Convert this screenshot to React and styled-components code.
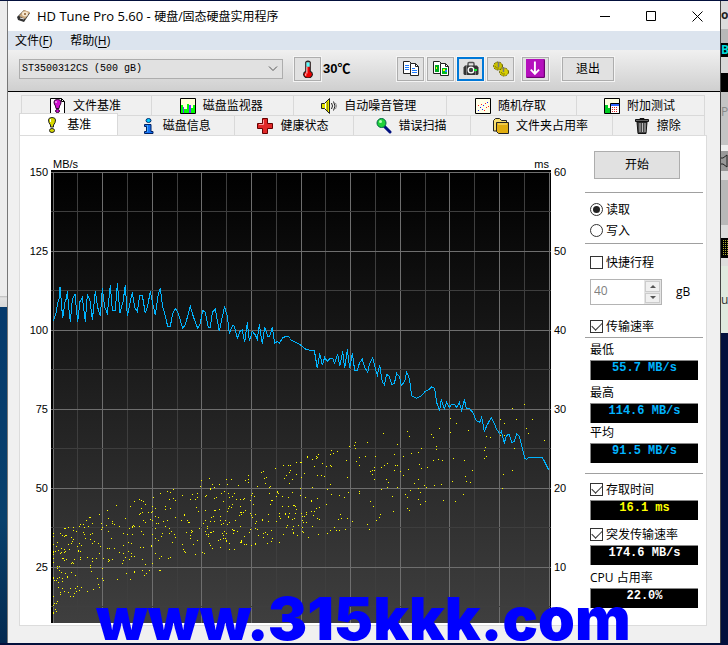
import React, { useState } from "react";
import styled, { createGlobalStyle } from "styled-components";

const speedStart =
  "160,152 168,130 174,95 178,85 180,52 183,85 188,145 196,90 199,88 202,64 206,110 211,155 217,88 225,73 233,155 240,95 247,83 256,155 262,73 270,92 277,150 286,63 293,112 301,138 307,55 314,112 322,130 331,46 337,121 346,121 352,40 360,128 369,95 376,46 382,138 388,108 397,67 404,112 412,125 419,76 427,76 436,130 443,108 451,64 458,100 466,136 475,70 481,55 488,112 494,130 503,169 511,169 518,130 527,115 535,130 548,175 556,164 571,109 580,140 593,175 601,160 608,121 616,127 625,172 631,172 637,127 646,118 658,184 667,140 674,109 682,140 688,190 698,166 703,169 712,205 720,184 727,180 734,217 742,157 748,214 757,184 766,195 772,208 778,163 787,223 794,172 803,199 809,199 817,172 824,220 832,214 838,220 848,203 862,198 870,202";
const speedEnd =
  "0,208 12,214 30,224 48,238 60,241 73,241 82,295 89,250 97,286 104,262 112,274 121,265 128,265 134,280 143,253 149,289 158,244 164,295 172,238 179,295 187,250 194,301 202,301 209,277 217,268 224,292 233,307 239,280 248,263 255,292 262,316 269,286 277,335 283,344 290,313 298,319 305,344 313,340 320,310 329,320 334,347 344,334 350,307 358,325 365,377 380,385 392,379 406,364 418,358 425,350 434,355 440,398 449,421 454,388 463,418 470,397 478,412 485,403 494,403 500,412 508,397 515,421 523,388 529,416 539,416 550,430 558,451 569,457 575,442 583,484 592,464 604,442 613,460 620,478 629,491 634,484 643,518 650,496 658,493 665,517 673,515 680,491 688,499 697,536 704,564 709,568 718,562 757,562 776,599";

const farSeeks =
  "703,13 667,25 481,55 631,58 679,58 727,58 499,70 643,70 448,85 709,85 535,91 481,97 352,94 358,108 280,100 425,103 430,112 589,109 601,112 715,100 763,121 631,106 643,106 197,127 193,137 232,127 322,133 439,139 439,149 586,142 583,151 673,145 178,139 196,146 142,154 130,160 394,145 385,157 364,161 340,168 313,163 256,169 226,169 208,171 169,181 199,184 292,190 316,196 323,196 388,193 430,181 445,178 457,181 490,175 523,181 583,175 589,169 547,211 667,211 640,223 283,196 274,202 241,214 247,211 253,202 253,211 208,196 313,211 331,214 355,208 394,205 412,202 172,232 247,223 253,238 289,238 295,247 322,262 340,226 373,250 385,238 403,256 409,262 433,256 454,253 487,244 526,229 529,244 541,247 637,265 361,271 385,265 391,277 385,298 391,313 406,304 460,302 496,304 520,283 346,283 352,292 352,325 358,331 310,334 307,289 241,304 250,319 271,343 268,352 259,361 232,373 238,388 187,364 172,355 151,343 154,355 145,358 166,388 148,391 139,391 133,382 148,286 163,292 175,277 208,274 208,280 274,268 292,262"
    .split(" ")
    .map((pair) => pair.split(",").map(Number))
    .map(([x, y]) => [x + 717, y + 690]);

// [x, earliest, latest] limits of the seek cloud
const seekBand = [
  [6, 1090, 1350],
  [80, 1055, 1280],
  [190, 1000, 1250],
  [300, 980, 1215],
  [450, 925, 1160],
  [630, 905, 1130],
  [850, 830, 1090],
];

function nearSeeks(count) {
  let seed = 7;
  const random = () => {
    seed = (seed * 16807) % 2147483647;
    return seed / 2147483647;
  };
  return Array.from({ length: count }, () => {
    const x = 6 + 840 * Math.pow(random(), 1.25);
    const i = seekBand.findIndex((b) => b[0] >= x);
    const a = seekBand[Math.max(i - 1, 0)];
    const b = seekBand[Math.max(i, 1)];
    const t = (x - a[0]) / (b[0] - a[0]);
    const top = a[1] + (b[1] - a[1]) * t;
    const bottom = a[2] + (b[2] - a[2]) * t;
    return [x, top + (bottom - top) * random()];
  });
}

const snap = (n) => Math.floor(n / 3) * 3;
const seeks = [...nearSeeks(530), ...farSeeks];

// icons
const icons = {
  disk: (
    <>
      <path d="M1 9 8 2l6 3-6 9-6-2z" fill="#333" />
      <path d="M3 8 8 2l6 2-5 7z" fill="#c9a77c" />
      <ellipse cx="9" cy="6" rx="3" ry="2.4" fill="#f5e6cf" />
      <circle cx="9" cy="6" r="1" fill="#8a5a2b" />
      <path d="m4 10 4 1" stroke="#eee" />
    </>
  ),
  thermometer: (
    <>
      <path d="M6 2q2-2 4 0v8q2 1 2 3-1 3-4 3t-4-3q0-2 2-3z" fill="#e00" stroke="#222" />
      <path d="M6.500 2h3v4h-3z" fill="#5ff" />
      <path d="M7 6v6M6 12v2" stroke="#fff" strokeWidth=".8" />
    </>
  ),
  copy: (
    <>
      <path d="M.500.500h6l2 2v10h-8z" fill="#fff" stroke="#222" />
      <path d="M7.500 2.500h5l3 3v9h-8z" fill="#fff" stroke="#222" />
      <path d="M12.500 2.500v3h3" fill="none" stroke="#222" />
      <path d="M2 4.500h4M2 6.500h4M2 8.500h4M9 7.500h3M9 9.500h5M9 11.500h5" stroke="#1e7bff" />
    </>
  ),
  copyImage: (
    <>
      <path d="M.500.500h6l2 2v10h-8z" fill="#fff" stroke="#222" />
      <path d="M2 4h4v7H2z" fill="#0a2" />
      <path d="M7.500 2.500h5l3 3v9h-8z" fill="#fff" stroke="#222" />
      <path d="M12.500 2.500v3h3" fill="none" stroke="#222" />
      <path d="M9 7h5v6H9z" fill="#0b2" />
      <path d="M10 8h2v2h-2zM3 6h1v2H3z" fill="#ff0" />
      <path d="M12 9h2v2h-2z" fill="#28f" />
    </>
  ),
  camera: (
    <>
      <path d="M5 5V3q0-1.500 1-1.500h4q1 0 1 1.500v2" fill="none" stroke="#555" strokeWidth="1.500" />
      <path d="M2 4.500h12l1.500 2V13l-1 1h-13l-1-1V6.500z" fill="#333" />
      <path d="M3.500 5v9M12.500 8v6" stroke="#777" />
      <circle cx="8" cy="9" r="3.500" fill="#fff" />
      <circle cx="8" cy="9" r="2.200" fill="#444" />
      <path d="M11 8h3v2h-3z" fill="#1e3" />
    </>
  ),
  gears: (
    <>
      <ellipse cx="5" cy="5" rx="4.500" ry="4" fill="#c8c000" stroke="#5f5900" strokeDasharray="2 1" />
      <ellipse cx="11" cy="11" rx="4.500" ry="4" fill="#d8cf00" stroke="#5f5900" strokeDasharray="2 1" />
      <path d="M5.500 1v5M10.500 6v5" stroke="#777" strokeWidth="1.500" />
      <path d="M2 5q1 3 4 2M8 11q1 3 4 2" fill="none" stroke="#8a8200" />
    </>
  ),
  download: (
    <>
      <rect x="0" y="0" width="16" height="16" rx="1" fill="#6b0070" />
      <path d="M0 0h15v15H0z" fill="#b510bd" />
      <path d="M7.500 2v10M4 9l3.500 3.500L11 9" fill="none" stroke="#fff" strokeWidth="1.600" />
    </>
  ),
  fileMark: (
    <>
      <path d="M.500.500h11l3 3v12h-14z" fill="#fff" stroke="#000" />
      <path d="M11.500.500v3h3" fill="none" stroke="#000" />
      <path d="M4 4q0-2.500 3.500-2.500T11 4 9.500 8l-.500 2.500H6L5.500 8Q4 6 4 4z" fill="#d010d0" stroke="#300030" />
      <path d="M6 3v2" stroke="#fff" />
      <ellipse cx="7.500" cy="13" rx="2" ry="1.500" fill="#d010d0" stroke="#300030" />
    </>
  ),
  monitor: (
    <>
      <path d="M.500.500h15v15H.500z" fill="#ffffd8" stroke="#000" />
      <path d="M1 7h2v8H1zM4 11h3v4H4zM7 6h2v9H7zM11 10h2v5h-2zM13 7h2v8h-2z" fill="#0f0" />
      <path d="M3 9h1v6H3zM9 7h2v8H9z" fill="#63f" />
    </>
  ),
  speaker: (
    <>
      <path d="M.500 5.500h3l5-5v15l-5-5h-3z" fill="#e4e400" stroke="#222" />
      <path d="M4.500 5v6" stroke="#fff" />
      <path d="M6.500 4v9" stroke="#999400" />
      <path d="M10.500 5q2 3 0 6M12.500 3.500q3 4.500 0 9" fill="none" stroke="#222" />
      <path d="M14.500 5q2 3 0 6" fill="none" stroke="#888" />
    </>
  ),
  scatter: (
    <>
      <path d="M.500.500h15v15H.500z" fill="#ffffe8" stroke="#000" />
      <path d="M3 12h1v1H3zM5 9h1v1H5zM8 7h1v1H8zM12 4h1v1h-1zM7 11h1v1H7z" fill="#22f" />
      <path d="M3 7h1v1H3zM6 6h1v1H6zM10 5h1v1h-1zM11 9h1v1h-1zM9 12h1v1H9zM13 8h1v1h-1z" fill="#f22" />
    </>
  ),
  extra: (
    <>
      <path d="M.500.500h15v15H.500z" fill="#ffffe0" stroke="#000" />
      <path d="M1 7h3v8H1zM4 10h2v5H4z" fill="#0c2" />
      <path d="M6.500 5.500h9v10h-9z" fill="#fff" stroke="#000" />
      <path d="M7 6h8v2H7z" fill="#36f" />
      <path d="M8 9.500h6M8 11.500h6M8 13.500h6" stroke="#d22" strokeDasharray="1 1" />
    </>
  ),
  mark: (
    <>
      <path d="M4.500 3q0-2.500 3.500-2.500T11.500 3Q11.500 6 9.500 8v2h-3V8Q4.500 6 4.500 3z" fill="#d8d800" stroke="#222" />
      <path d="M6.500 2v3" stroke="#fff" />
      <ellipse cx="8" cy="13.500" rx="2.500" ry="2" fill="#d8d800" stroke="#222" />
    </>
  ),
  info: (
    <>
      <ellipse cx="8.500" cy="2.500" rx="2.500" ry="2" fill="#0cf" stroke="#002a70" />
      <path d="M4.500 6.500h6.500v7h2v2H4.500v-2h2v-5h-2z" fill="#1670f0" stroke="#002060" />
      <path d="M7.500 7v7" stroke="#4af" />
    </>
  ),
  cross: (
    <>
      <path d="M5.500.500h5v5h5v5h-5v5h-5v-5h-5v-5h5z" fill="#e02828" stroke="#600" />
      <path d="M6.500 2v4.500H2" fill="none" stroke="#f99" />
    </>
  ),
  magnifier: (
    <>
      <path d="m8 8 6 6" stroke="#001080" strokeWidth="3" strokeLinecap="round" />
      <circle cx="5.500" cy="5" r="4.500" fill="#1fd13a" stroke="#064" />
      <circle cx="4.500" cy="3.500" r="1.500" fill="#b8ffb8" />
    </>
  ),
  folder: (
    <>
      <path d="M.500 13V2.500l2-2h4l2 2h5V13z" fill="#f8df70" stroke="#222" />
      <path d="M3.500 4.500h12v11h-10l-2-2z" fill="#e0ad10" stroke="#222" />
      <path d="M5 6h9" stroke="#ffe680" />
    </>
  ),
  trash: (
    <>
      <path d="M3 4h10l-1 11.500H4z" fill="#444" stroke="#111" />
      <path d="M6 5v9M8.500 5v9M11 5v9" stroke="#bbb" />
      <path d="M1.500 1.500h13v2h-13zM6 .500h4v1H6z" fill="#666" stroke="#111" />
    </>
  ),
};

function Icon({ name, size = 16 }) {
  return (
    <svg width={size} height={size} viewBox="0 0 16 16" aria-hidden="true">
      {icons[name]}
    </svg>
  );
}

function Chart() {
  const columns = Array.from({ length: 21 }, (_, i) => i);
  const rows = Array.from({ length: 12 }, (_, i) => i);
  const line = (i) => (i % 2 ? "#3e3e3e" : "#6e6e6e");
  const byWeight = (a, b) => (b % 2) - (a % 2);

  return (
    <Plot viewBox="0 0 1500 1359" preserveAspectRatio="none" role="img">
      <defs>
        <linearGradient id="shade" x1="0" y1="0" x2="0" y2="1">
          <stop offset="0" stopColor="#000" />
          <stop offset="1" stopColor="#3f3f3f" />
        </linearGradient>
      </defs>
      <rect width="1500" height="1359" />
      <rect x="6" y="6" width="1491" height="1353" fill="url(#shade)" />
      {[...columns].sort(byWeight).map((i) => (
        <rect key={i} x={6 + 3 * Math.floor(24.8 * i)} y="6" width="3" height="1353" fill={line(i)} />
      ))}
      {[...rows].sort(byWeight).map((i) => (
        <rect key={i} x="0" y={6 + 3 * Math.floor(39.5 * i)} width="1500" height="3" fill={line(i)} />
      ))}
      {seeks.map(([x, y], i) => (
        <rect key={i} x={snap(x)} y={snap(y)} width="3" height="3" fill="#ff0" />
      ))}
      <g fill="none" stroke="#00b4ff" strokeWidth="3">
        <polyline points={speedStart} transform="translate(-153 300)" />
        <polyline points={speedEnd} transform="translate(717 300)" />
      </g>
    </Plot>
  );
}

const topTabs = [
  { icon: "fileMark", label: "文件基准", size: 130 },
  { icon: "monitor", label: "磁盘监视器", size: 142 },
  { icon: "speaker", label: "自动噪音管理", size: 154 },
  { icon: "scatter", label: "随机存取", size: 130 },
  { icon: "extra", label: "附加测试", size: 128 },
];

const bottomTabs = [
  { icon: "mark", label: "基准", size: 98 },
  { icon: "info", label: "磁盘信息", size: 117 },
  { icon: "cross", label: "健康状态", size: 119 },
  { icon: "magnifier", label: "错误扫描", size: 118 },
  { icon: "folder", label: "文件夹占用率", size: 142 },
  { icon: "trash", label: "擦除", size: 92 },
];

export default function App() {
  const [mode, setMode] = useState("read");

  return (
    <Desktop>
      <GlobalStyle />
      <LeftEdge />
      <Window>
        <TitleBar>
          <Icon name="disk" />
          <h1>
            <span>HD Tune Pro 5.60 - </span>硬盘/固态硬盘实用程序
          </h1>
          <WindowButton aria-label="最小化">
            <svg width="11" height="11">
              <path d="M0 5.500h10" stroke="#000" />
            </svg>
          </WindowButton>
          <WindowButton aria-label="最大化">
            <svg width="11" height="11">
              <path d="M.500.500h9v9h-9z" fill="none" stroke="#000" />
            </svg>
          </WindowButton>
          <WindowButton aria-label="关闭">
            <svg width="11" height="11">
              <path d="m.500.500 10 10m0-10-10 10" stroke="#000" />
            </svg>
          </WindowButton>
        </TitleBar>
        <MenuBar>
          <button>
            文件(<u>F</u>)
          </button>
          <button>
            帮助(<u>H</u>)
          </button>
        </MenuBar>
        <Toolbar>
          <DriveBox>
            <select aria-label="驱动器">
              <option>ST3500312CS (500 gB)</option>
            </select>
            <svg width="10" height="6">
              <path d="m1 .500 4 4 4-4" fill="none" stroke="#555" />
            </svg>
          </DriveBox>
          <ToolButton aria-label="温度">
            <Icon name="thermometer" size={18} />
          </ToolButton>
          <Temperature>30℃</Temperature>
          <ToolGroup>
            <ToolButton aria-label="复制文本">
              <Icon name="copy" />
            </ToolButton>
            <ToolButton aria-label="复制图像">
              <Icon name="copyImage" />
            </ToolButton>
            <ToolButton $active aria-label="截图">
              <Icon name="camera" />
            </ToolButton>
            <ToolButton aria-label="选项">
              <Icon name="gears" />
            </ToolButton>
          </ToolGroup>
          <ToolButton aria-label="保存">
            <Icon name="download" size={19} />
          </ToolButton>
          <ExitButton>退出</ExitButton>
        </Toolbar>
        <Body>
          <TabRow role="tablist">
            {topTabs.map((tab) => (
              <Tab key={tab.label} $size={tab.size} role="tab">
                <Icon name={tab.icon} />
                {tab.label}
              </Tab>
            ))}
          </TabRow>
          <TabRow role="tablist" $front>
            {bottomTabs.map((tab, i) => (
              <Tab key={tab.label} $size={tab.size} $selected={i === 0} role="tab">
                <Icon name={tab.icon} />
                {tab.label}
              </Tab>
            ))}
          </TabRow>
          <Panel>
            <Axis $align="right">
              {[150, 125, 100, 75, 50, 25].map((n) => (
                <span key={n}>{n}</span>
              ))}
            </Axis>
            <ChartArea>
              <Units>
                <span>MB/s</span>
                <span>ms</span>
              </Units>
              <Chart />
            </ChartArea>
            <Axis $align="left">
              {[60, 50, 40, 30, 20, 10].map((n) => (
                <span key={n}>{n}</span>
              ))}
            </Axis>
            <Sidebar>
              <StartButton>开始</StartButton>
              <Section $top={6} $bottom={2}>
                <Choice>
                  <input type="radio" name="mode" checked={mode === "read"} onChange={() => setMode("read")} />
                  读取
                </Choice>
                <Choice>
                  <input type="radio" name="mode" checked={mode === "write"} onChange={() => setMode("write")} />
                  写入
                </Choice>
              </Section>
              <Section $top={8}>
                <Choice>
                  <input type="checkbox" />
                  快捷行程
                </Choice>
                <StrokeRow>
                  <Spinner>
                    <input aria-label="容量" defaultValue="40" disabled />
                    <div>
                      <button disabled aria-label="增加">
                        <svg width="6" height="3">
                          <path d="M0 3 3 0l3 3z" fill="#555" />
                        </svg>
                      </button>
                      <button disabled aria-label="减少">
                        <svg width="6" height="3">
                          <path d="m0 0 3 3 3-3z" fill="#555" />
                        </svg>
                      </button>
                    </div>
                  </Spinner>
                  <span>gB</span>
                </StrokeRow>
                <Choice>
                  <input type="checkbox" defaultChecked />
                  传输速率
                </Choice>
              </Section>
              <Section $top={2} $bottom={10}>
                <Caption>最低</Caption>
                <Readout>55.7 MB/s</Readout>
                <Caption $space={3}>最高</Caption>
                <Readout>114.6 MB/s</Readout>
                <Caption>平均</Caption>
                <Readout>91.5 MB/s</Readout>
              </Section>
              <Section $top={5}>
                <Choice>
                  <input type="checkbox" defaultChecked />
                  存取时间
                </Choice>
                <Readout $color="#ff0">16.1 ms</Readout>
                <Choice $space={4}>
                  <input type="checkbox" defaultChecked />
                  突发传输速率
                </Choice>
                <Readout $color="#fff">174.6 MB/s</Readout>
                <Caption $space={3}>CPU 占用率</Caption>
                <Readout $color="#fff">22.0%</Readout>
              </Section>
            </Sidebar>
          </Panel>
        </Body>
      </Window>
      <RightEdge aria-hidden="true">
        <Sliver $height={28} $bg="#dcdcdc" $color="#222">o</Sliver>
        <Sliver $height={14} $bg="#b8b8b8" />
        <Sliver $height={14} $bg="#000" $color="#0dd">B</Sliver>
        <Sliver $height={16} $bg="#d8d8d8" />
        <Sliver $height={19} $bg="#000" />
        <Sliver $height={39} $bg="#c4c4c4" $color="#888">P</Sliver>
        <Sliver $height={14} $bg="#c4c4c4" />
        <Sliver $height={6} $bg="#eee" />
        <Sliver $height={20} $bg="#999">
          <svg width="7" height="14">
            <path d="M0 4h2l4-3v12L2 10H0" fill="none" stroke="#222" />
          </svg>
        </Sliver>
        <Sliver $height={9} $bg="#ddd" />
        <Sliver $height={45} $bg="#b8b8b8" />
        <Sliver $height={13} $bg="#ddd" />
        <Sliver $height={20} $bg="#000">
          <svg width="7" height="16">
            <path d="M2.500 0v16M4.500 0v16M6.500 0v16" stroke="#aa3" strokeDasharray="1 1" />
          </svg>
        </Sliver>
        <Sliver $height={8} $bg="#ddd" />
        <Sliver $height={67} $bg="#dfe9df" $color="#333">un</Sliver>
      </RightEdge>
      <Watermark>www.315kkk.com</Watermark>
    </Desktop>
  );
}

// styling
const GlobalStyle = createGlobalStyle`
  * {
    box-sizing: border-box;
  }
  body {
    margin: 0;
    font-family: "Open Sans", "Noto Sans CJK SC", sans-serif;
    font-size: 12px;
    line-height: 16px;
    color: #000;
  }
  button,
  input,
  select {
    font: inherit;
    color: inherit;
    margin: 0;
    padding: 0;
    border: 0;
    border-radius: 0;
    background: none;
  }
  svg {
    display: block;
    flex: none;
  }
`;

const Desktop = styled.div`
  position: relative;
  display: grid;
  grid-template-columns: 8px 1fr 8px;
  min-height: 100vh;
  padding: 1px 0 2px;
  background: #03103c;
  overflow: hidden;
`;

const LeftEdge = styled.div`
  border-right: 1px solid #777;
  background: linear-gradient(#ececec 295px, #bbb 295px, #e2e2e2 297px, #d8d8d8 306px, #063a6c 306px, #08406c 520px, #042a50);
`;

const RightEdge = styled.div`
  border-left: 1px solid #444;
  overflow: hidden;
`;

const Sliver = styled.div`
  display: flex;
  align-items: center;
  height: ${(props) => props.$height}px;
  background: ${(props) => props.$bg};
  color: ${(props) => props.$color || "#000"};
  font-weight: ${(props) => (props.$height < 30 ? 700 : 400)};
  overflow: hidden;
`;

const Window = styled.main`
  display: flex;
  flex-direction: column;
  min-width: 0;
  background: #f0f0f0;
`;

const TitleBar = styled.header`
  display: flex;
  align-items: center;
  height: 30px;
  padding-left: 8px;
  background: #fff;

  h1 {
    flex: 1;
    margin: 0 0 0 5px;
    font-size: 12px;
    font-weight: 400;
    white-space: pre;
  }
  h1 span {
    font-size: 13px;
  }
`;

const WindowButton = styled.button`
  display: grid;
  place-items: center;
  width: 46px;
  height: 30px;
`;

const MenuBar = styled.nav`
  display: flex;
  gap: 18px;
  height: 19px;
  padding-left: 7px;
  background: #dce4ee;

  u {
    text-underline-offset: 2px;
  }
`;

const Toolbar = styled.div`
  display: flex;
  align-items: center;
  height: 42px;
  padding: 0 11px 4px;
  border-bottom: 1px solid #000;
  background: linear-gradient(#f0f0f0, #cfcfcf);
`;

const DriveBox = styled.div`
  display: grid;
  align-items: center;
  flex: 0 1 264px;
  height: 20px;
  margin-right: 11px;
  border: 1px solid #adadad;
  background: #e1e1e1;

  select,
  svg {
    grid-area: 1 / 1;
  }
  select {
    appearance: none;
    width: 100%;
    padding-left: 2px;
    font-family: "Liberation Mono", monospace;
    font-size: 10px;
  }
  svg {
    justify-self: end;
    margin-right: 4px;
    pointer-events: none;
  }
`;

const ToolButton = styled.button`
  display: grid;
  place-items: center;
  flex: none;
  width: 27px;
  height: 24px;
  border: ${(props) => (props.$active ? "2px solid #0078d7" : "1px solid #adadad")};
  outline: 1px solid #f4f4f4;
  background: #e1e1e1;
`;

const Temperature = styled.output`
  flex: none;
  width: 76px;
  padding-left: 2px;
  font-family: "Liberation Sans", "Noto Sans CJK SC", sans-serif;
  font-size: 13px;
  font-weight: 700;
`;

const ToolGroup = styled.div`
  display: flex;
  gap: 3px;
  margin-right: 8px;
`;

const ExitButton = styled(ToolButton)`
  width: 52px;
  margin-left: 13px;
`;

const Body = styled.div`
  flex: 1;
  padding: 3px 13px 17px 11px;
`;

const TabRow = styled.div`
  display: flex;
  align-items: flex-end;
  height: 20px;
  padding: ${(props) => (props.$front ? "0 2px 0 0" : "0 2px")};
`;

const Tab = styled.button`
  display: flex;
  align-items: center;
  justify-content: center;
  gap: 7px;
  flex: ${(props) => props.$size} 1 0;
  min-width: 0;
  height: ${(props) => (props.$selected ? 22 : 20)}px;
  padding-right: 2px;
  border: 1px solid #d9d9d9;
  border-width: 1px 1px 0 0;
  background: ${(props) => (props.$selected ? "#fff" : "#f0f0f0")};
  white-space: nowrap;

  &:first-child {
    border-left-width: 1px;
  }
`;

const Panel = styled.section`
  display: grid;
  grid-template-columns: 31px minmax(0, 1fr) 34px 118px;
  padding: 0 3px 2px 0;
  border: 1px solid #dcdcdc;
  background: #fff;
`;

const Axis = styled.div`
  display: flex;
  flex-direction: column;
  gap: 67px;
  padding: 30px 3px 0;
  font-family: "Liberation Sans", sans-serif;
  font-size: 11px;
  line-height: 12px;
  text-align: ${(props) => props.$align};
`;

const ChartArea = styled.div`
  padding-top: 22px;
`;

const Units = styled.div`
  display: flex;
  justify-content: space-between;
  padding: 0 2px;
  font-family: "Liberation Sans", sans-serif;
  font-size: 11px;
  line-height: 12px;
`;

const Plot = styled.svg`
  width: 100%;
  height: 453px;
  shape-rendering: crispEdges;
`;

const Sidebar = styled.aside`
  padding-top: 15px;
`;

const StartButton = styled.button`
  display: block;
  width: 86px;
  height: 28px;
  margin: 0 0 13px 9px;
  border: 1px solid #adadad;
  background: #e1e1e1;
`;

const Section = styled.div`
  padding: ${(props) => props.$top}px 5px ${(props) => props.$bottom || 0}px;
  border-top: 1px solid #a0a0a0;
`;

const Choice = styled.label`
  display: flex;
  align-items: center;
  gap: 3px;
  height: 21px;
  margin-top: ${(props) => props.$space || 0}px;
  white-space: nowrap;

  input {
    appearance: none;
    display: grid;
    place-items: center;
    flex: none;
    width: 13px;
    height: 13px;
    border: 1px solid #333;
    background: #fff;
  }
  input[type="radio"] {
    border-radius: 50%;
  }
  input[type="radio"]:checked::before {
    content: "";
    width: 7px;
    height: 7px;
    border-radius: 50%;
    background: #222;
  }
  input[type="checkbox"]:checked::before {
    content: "";
    width: 9px;
    height: 5px;
    margin-bottom: 3px;
    border: solid #333;
    border-width: 0 0 1px 1px;
    transform: rotate(-45deg);
  }
`;

const StrokeRow = styled.div`
  display: flex;
  align-items: center;
  gap: 14px;
  margin: 6px 0 11px;
`;

const Spinner = styled.div`
  display: flex;
  width: 72px;
  height: 26px;
  border: 1px solid #b4b4b4;

  input {
    flex: 1;
    min-width: 0;
    padding: 0 3px 2px;
    color: #808080;
  }
  div {
    display: grid;
    width: 17px;
    gap: 1px;
    padding: 1px;
    background: #e4e4e4;
  }
  button {
    display: grid;
    place-items: center;
    border: 1px solid #ccc;
    background: #f0f0f0;
  }
`;

const Caption = styled.div`
  height: 20px;
  margin-top: ${(props) => props.$space || 0}px;
  line-height: 20px;
`;

const Readout = styled.output`
  display: block;
  height: 20px;
  border: 1px solid #888;
  border-width: 1px 0 0 1px;
  background: #000;
  color: ${(props) => props.$color || "#00b4ff"};
  font-family: "Liberation Mono", monospace;
  font-weight: 700;
  line-height: 14px;
  text-align: center;
`;

const Watermark = styled.div`
  position: absolute;
  left: 96px;
  bottom: 4px;
  font-family: Inter, sans-serif;
  font-size: 59px;
  font-weight: 900;
  line-height: 44px;
  color: #00f;
  pointer-events: none;
`;
